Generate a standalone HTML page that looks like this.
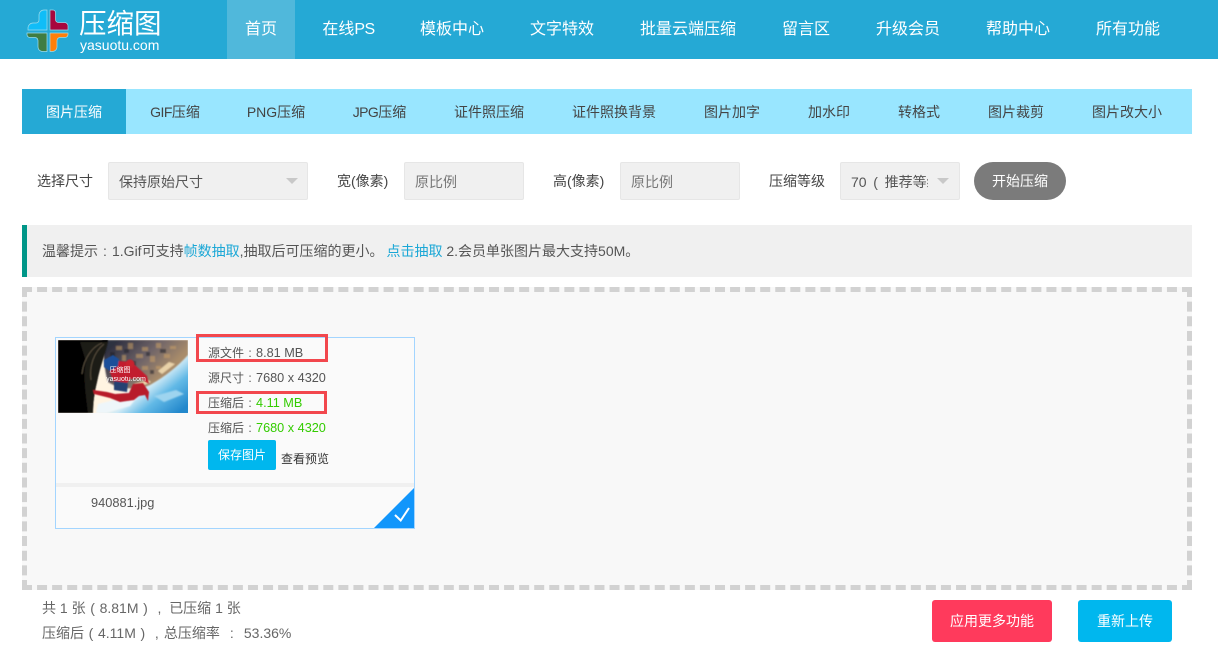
<!DOCTYPE html>
<html lang="zh">
<head>
<meta charset="utf-8">
<title>压缩图</title>
<style>
html,body{margin:0;padding:0;width:1218px;height:662px;overflow:hidden;background:#fff}
body{position:relative;font-family:"Liberation Sans","Noto Sans CJK SC",sans-serif;font-size:14px;color:#444}
.a{position:absolute;white-space:nowrap}
.c{position:absolute;white-space:nowrap;transform:translateX(-50%)}
.nav{top:0;line-height:59px;font-size:16px;color:#fff}
.sub{top:89px;line-height:46px;font-size:14px;color:#444}
.lbl{top:162px;line-height:38px;font-size:14px;color:#444}
.box{position:absolute;top:162px;height:36px;background:#f0f0f0;border:1px solid #e6e6e6;border-radius:2px;line-height:38px;font-size:14px;color:#555;overflow:hidden}
.tri{position:absolute;width:0;height:0;border-left:6px solid transparent;border-right:6px solid transparent;border-top:6px solid #c8c8c8}
.info{left:208px;font-size:12px;color:#555;line-height:16px}
.n{font-size:12.700px}
.g{color:#33cc00}
.k{display:inline-block;text-align:center}
.k12{width:12px}
.k14{width:14px}
.red{position:absolute;border:3px solid #f2474d;box-sizing:border-box}
.btn{position:absolute;color:#fff;text-align:center;border-radius:3px;font-size:14px}
.foot{line-height:20px;font-size:14px;color:#666}
</style>
</head>
<body>
<div class="a" style="left:0;top:0;width:1218px;height:59px;background:#25a9d5"></div>
<div class="a" style="left:227px;top:0;width:68px;height:59px;background:#50b8db"></div>

<svg class="a" style="left:0;top:0" width="80" height="59" viewBox="0 0 80 59">
<path d="M47 10h-3a5 5 0 0 0-5 5v5a3 3 0 0 1-3 3h-3a5 5 0 0 0-5 5v2h19z" fill="#10bdf8" stroke="#9fdcec" stroke-width=".7"/>
<path d="M50 10h3a2.500 2.500 0 0 1 2.500 2.500v7a3 3 0 0 0 3 3h6a3.500 3.500 0 0 1 3.500 3.500v4H50z" fill="#a8063d" stroke="#9fdcec" stroke-width=".7"/>
<path d="M47 33H27v1.500a3 3 0 0 0 3 3h5a3 3 0 0 1 3 3V47a4.500 4.500 0 0 0 4.500 4.500H47z" fill="#3f7d42" stroke="#9fdcec" stroke-width=".7"/>
<path d="M50 33h18v1.500a3 3 0 0 1-3 3h-5a3 3 0 0 0-3 3V47a4.500 4.500 0 0 1-4.500 4.500H50z" fill="#ff7f0a" stroke="#9fdcec" stroke-width=".7"/>
</svg>
<div class="a" style="left:79px;top:5px;font-size:27.500px;line-height:38px;color:#fff">压缩图</div>
<div class="a" style="left:80px;top:37px;font-size:14px;line-height:16px;color:#fff">yasuotu.com</div>

<div class="c nav" style="left:261px">首页</div>
<div class="c nav" style="left:348.500px">在线<span style="letter-spacing:-.6px">PS</span></div>
<div class="c nav" style="left:452px">模板中心</div>
<div class="c nav" style="left:562px">文字特效</div>
<div class="c nav" style="left:688px">批量云端压缩</div>
<div class="c nav" style="left:806px">留言区</div>
<div class="c nav" style="left:908px">升级会员</div>
<div class="c nav" style="left:1018px">帮助中心</div>
<div class="c nav" style="left:1128px">所有功能</div>

<div class="a" style="left:22px;top:89px;width:1170px;height:45px;background:#99e6ff"></div>
<div class="a" style="left:22px;top:89px;width:104px;height:45px;background:#25a9d5"></div>
<div class="c sub" style="left:74px;color:#fff">图片压缩</div>
<div class="c sub" style="left:175px"><span style="letter-spacing:-.5px">GIF</span>压缩</div>
<div class="c sub" style="left:276px">PNG压缩</div>
<div class="c sub" style="left:379.500px"><span style="letter-spacing:-.6px">JPG</span>压缩</div>
<div class="c sub" style="left:489px">证件照压缩</div>
<div class="c sub" style="left:614px">证件照换背景</div>
<div class="c sub" style="left:732px">图片加字</div>
<div class="c sub" style="left:829px">加水印</div>
<div class="c sub" style="left:919px">转格式</div>
<div class="c sub" style="left:1016px">图片裁剪</div>
<div class="c sub" style="left:1127px">图片改大小</div>

<div class="a lbl" style="left:37px">选择尺寸</div>
<div class="box" style="left:108px;width:198px"><span class="a" style="left:10px">保持原始尺寸</span></div>
<div class="tri" style="left:286px;top:178px"></div>
<div class="a lbl" style="left:337px">宽(像素)</div>
<div class="box" style="left:404px;width:118px"><span class="a" style="left:10px;color:#777">原比例</span></div>
<div class="a lbl" style="left:553px">高(像素)</div>
<div class="box" style="left:620px;width:118px"><span class="a" style="left:10px;color:#777">原比例</span></div>
<div class="a lbl" style="left:769px">压缩等级</div>
<div class="box" style="left:840px;width:118px"><span class="a" style="left:10px;width:77px;overflow:hidden">70<span class="k" style="width:18px">(</span>推荐等级</span></div>
<div class="tri" style="left:937px;top:178px"></div>
<div class="btn" style="left:974px;top:162px;width:92px;height:38px;line-height:38px;border-radius:19px;background:#7b7b7b">开始压缩</div>

<div class="a" style="left:22px;top:225px;width:1170px;height:52px;background:#f0f0f0"></div>
<div class="a" style="left:22px;top:225px;width:5px;height:52px;background:#009688"></div>
<div class="a" style="left:42px;top:225px;line-height:52px;font-size:14px;color:#555">温馨提示<span class="k k14">:</span>1.Gif可支持<span style="color:#1aa7d6">帧数抽取</span>,抽取后可压缩的更小。<span style="color:#1aa7d6;margin-left:3px">点击抽取</span> 2.会员单张图片最大支持50M。</div>

<div class="a" style="left:22px;top:287px;width:1170px;height:303px;background:#f8f8f8"></div>
<svg class="a" style="left:22px;top:287px" width="1170" height="303" viewBox="0 0 1170 303" fill="none" stroke="#d2d2d2" stroke-width="5">
<path d="M0 2.500H1170" stroke-dasharray="10 5.065"/>
<path d="M0 300.500H1170" stroke-dasharray="10 5.065"/>
<path d="M2.500 0V303" stroke-dasharray="10 4.650"/>
<path d="M1167.500 0V303" stroke-dasharray="10 4.650"/>
</svg>

<div class="a" style="left:55px;top:337px;width:358px;height:190px;border:1px solid #a3d5ff;background:#fafafa"></div>
<div class="a" style="left:56px;top:483px;width:358px;height:4px;background:#f0f0f0"></div>

<svg class="a" style="left:58px;top:340px" width="130" height="73" viewBox="0 0 130 73">
<defs>
<linearGradient id="sky" gradientUnits="userSpaceOnUse" x1="84" y1="36" x2="116" y2="76">
<stop offset="0" stop-color="#fff4e2"/><stop offset=".25" stop-color="#cfeaf6"/><stop offset=".55" stop-color="#62b9e6"/><stop offset="1" stop-color="#2388cc"/>
</linearGradient>
<linearGradient id="city" gradientUnits="userSpaceOnUse" x1="60" y1="0" x2="100" y2="40">
<stop offset="0" stop-color="#2f3040"/><stop offset=".55" stop-color="#6f6468"/><stop offset="1" stop-color="#a98c6a"/>
</linearGradient>
<filter id="b1" x="-10%" y="-10%" width="120%" height="120%"><feGaussianBlur stdDeviation=".9"/></filter>
<filter id="b2" x="-10%" y="-10%" width="120%" height="120%"><feGaussianBlur stdDeviation=".4"/></filter>
</defs>
<rect width="130" height="73" fill="url(#sky)"/>
<g filter="url(#b1)">
<path d="M44 0H130V15C120 26 108 36 92 45 80 50 62 50 50 42 46 30 46 12 44 0Z" fill="url(#city)"/>
<g fill="#c9a066" opacity=".55">
<rect x="58" y="6" width="6" height="4"/><rect x="70" y="3" width="5" height="6"/><rect x="84" y="7" width="6" height="4"/>
<rect x="98" y="3" width="5" height="5"/><rect x="112" y="6" width="6" height="3"/><rect x="64" y="15" width="4" height="6"/>
<rect x="78" y="14" width="7" height="4"/><rect x="92" y="16" width="5" height="6"/><rect x="106" y="14" width="6" height="4"/>
<rect x="84" y="26" width="6" height="4"/><rect x="98" y="26" width="5" height="3"/><rect x="74" y="34" width="6" height="4"/>
</g>
<g fill="#1f2029" opacity=".55">
<rect x="52" y="12" width="5" height="8"/><rect x="66" y="9" width="5" height="4"/><rect x="88" y="12" width="4" height="4"/>
<rect x="102" y="9" width="6" height="4"/><rect x="74" y="21" width="4" height="5"/><rect x="92" y="30" width="4" height="4"/>
</g>
<path d="M100 31l11-9 6 2-13 10zM76 44l14-4 3 2-13 6z" fill="#e9d2a8"/>
<path d="M40 64l24-6 16-2-8 10-24 7H38z" fill="#eef6fa"/>
<path d="M96 56l22-6 8 4-20 8z" fill="#9ed4ef"/>
</g>
<g filter="url(#b2)">
<path d="M0 0H50C48 12 42 26 39 42 36 54 35 64 35 73H0Z" fill="#030303"/>
<path d="M22 2H50C48 12 42 26 39 42 36 54 35 64 35 73H30C27 50 25 34 28 22Z" fill="#1e1a17"/>
<path d="M24 34C26 16 36 6 44 3M33 40C31 26 36 12 46 4" stroke="#4f4639" stroke-width="1.200" fill="none"/>
<path d="M35 50l14 2 8 2 14-1 4-9 10-1 6 9-1 9-3-6-6 1-5 4-14 2-10-4-16-4z" fill="#b81d2c"/>
<path d="M50 26l10-5 13 1 5 4 11 10 2 8-9-6-10 1-6 8-9-2-4-10z" fill="#c21f2e"/>
<path d="M46 20l9-5 6 4-1 7-8 5-6-4z" fill="#1f4f9a"/>
<path d="M56 41l14 2-1 9-13-2z" fill="#274272"/>
<circle cx="72" cy="24" r="4.500" fill="#c8202e"/>
</g>
<text x="62" y="32" font-size="7" fill="#fff" text-anchor="middle">压缩图</text>
<text x="68" y="41" font-size="7" fill="#fff" text-anchor="middle">yasuotu.com</text>
</svg>

<div class="red" style="left:196px;top:334px;width:132px;height:28px"></div>
<div class="red" style="left:196px;top:391px;width:131px;height:23px"></div>
<div class="a info" style="top:345px">源文件<span class="k k12">:</span><span class="n">8.81 MB</span></div>
<div class="a info" style="top:370px">源尺寸<span class="k k12">:</span><span class="n">7680 x 4320</span></div>
<div class="a info" style="top:395px">压缩后<span class="k k12">:</span><span class="g n">4.11 MB</span></div>
<div class="a info" style="top:420px">压缩后<span class="k k12">:</span><span class="g n">7680 x 4320</span></div>
<div class="btn" style="left:208px;top:440px;width:68px;height:30px;line-height:30px;background:#00b7ee;font-size:12px;border-radius:2px">保存图片</div>
<div class="a" style="left:281px;top:451px;font-size:12px;line-height:16px;color:#333">查看预览</div>
<div class="a" style="left:91px;top:495px;font-size:12.800px;line-height:16px;color:#555">940881.jpg</div>

<svg class="a" style="left:374px;top:488px" width="40" height="40" viewBox="0 0 40 40">
<path d="M40 0V40H0Z" fill="#1296fb"/>
<path d="M21 27l5.700 5.500L35 20" fill="none" stroke="#fff" stroke-width="2"/>
</svg>

<div class="a foot" style="left:42px;top:598px">共 1 张<span class="k k14">(</span>8.81M<span class="k k14">)</span><span class="k k14">,</span><span style="margin-left:2.700px">已压缩</span> 1 张</div>
<div class="a foot" style="left:42px;top:623px">压缩后<span class="k k14">(</span>4.11M<span class="k k14">)</span><span class="k k14">,</span>总压缩率<span class="k" style="width:24px">:</span>53.36%</div>
<div class="btn" style="left:932px;top:600px;width:120px;height:42px;line-height:42px;background:#ff3a5c">应用更多功能</div>
<div class="btn" style="left:1078px;top:600px;width:94px;height:42px;line-height:42px;background:#00b7ee">重新上传</div>
</body>
</html>
